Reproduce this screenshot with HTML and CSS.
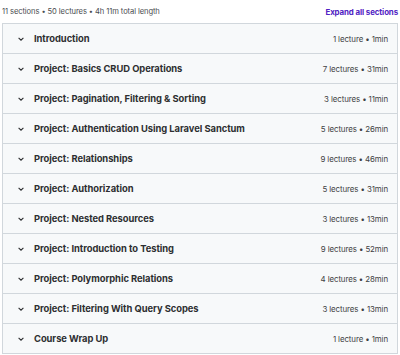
FILE: index.html
```html
<!DOCTYPE html>
<html>
<head>
<meta charset="utf-8">
<link rel="stylesheet" href="styles.css">
</head>
<body>
<div class="curriculum">
  <div class="top">
    <span class="summary">11 sections • 50 lectures • 4h 11m total length</span>
    <button class="expand">Expand all sections</button>
  </div>
  <div class="sections">
    <div class="row"><span class="chev"><svg viewBox="0 0 10 10" width="8" height="8"><path d="M2 3.5 L5 6.5 L8 3.5" fill="none" stroke="#2d2f31" stroke-width="1.4"/></svg></span><span class="title">Introduction</span><span class="meta">1 lecture • 1min</span></div>
    <div class="row"><span class="chev"><svg viewBox="0 0 10 10" width="8" height="8"><path d="M2 3.5 L5 6.5 L8 3.5" fill="none" stroke="#2d2f31" stroke-width="1.4"/></svg></span><span class="title">Project: Basics CRUD Operations</span><span class="meta">7 lectures • 31min</span></div>
    <div class="row"><span class="chev"><svg viewBox="0 0 10 10" width="8" height="8"><path d="M2 3.5 L5 6.5 L8 3.5" fill="none" stroke="#2d2f31" stroke-width="1.4"/></svg></span><span class="title">Project: Pagination, Filtering &amp; Sorting</span><span class="meta">3 lectures • 11min</span></div>
    <div class="row"><span class="chev"><svg viewBox="0 0 10 10" width="8" height="8"><path d="M2 3.5 L5 6.5 L8 3.5" fill="none" stroke="#2d2f31" stroke-width="1.4"/></svg></span><span class="title">Project: Authentication Using Laravel Sanctum</span><span class="meta">5 lectures • 26min</span></div>
    <div class="row"><span class="chev"><svg viewBox="0 0 10 10" width="8" height="8"><path d="M2 3.5 L5 6.5 L8 3.5" fill="none" stroke="#2d2f31" stroke-width="1.4"/></svg></span><span class="title">Project: Relationships</span><span class="meta">9 lectures • 46min</span></div>
    <div class="row"><span class="chev"><svg viewBox="0 0 10 10" width="8" height="8"><path d="M2 3.5 L5 6.5 L8 3.5" fill="none" stroke="#2d2f31" stroke-width="1.4"/></svg></span><span class="title">Project: Authorization</span><span class="meta">5 lectures • 31min</span></div>
    <div class="row"><span class="chev"><svg viewBox="0 0 10 10" width="8" height="8"><path d="M2 3.5 L5 6.5 L8 3.5" fill="none" stroke="#2d2f31" stroke-width="1.4"/></svg></span><span class="title">Project: Nested Resources</span><span class="meta">3 lectures • 13min</span></div>
    <div class="row"><span class="chev"><svg viewBox="0 0 10 10" width="8" height="8"><path d="M2 3.5 L5 6.5 L8 3.5" fill="none" stroke="#2d2f31" stroke-width="1.4"/></svg></span><span class="title">Project: Introduction to Testing</span><span class="meta">9 lectures • 52min</span></div>
    <div class="row"><span class="chev"><svg viewBox="0 0 10 10" width="8" height="8"><path d="M2 3.5 L5 6.5 L8 3.5" fill="none" stroke="#2d2f31" stroke-width="1.4"/></svg></span><span class="title">Project: Polymorphic Relations</span><span class="meta">4 lectures • 28min</span></div>
    <div class="row"><span class="chev"><svg viewBox="0 0 10 10" width="8" height="8"><path d="M2 3.5 L5 6.5 L8 3.5" fill="none" stroke="#2d2f31" stroke-width="1.4"/></svg></span><span class="title">Project: Filtering With Query Scopes</span><span class="meta">3 lectures • 13min</span></div>
    <div class="row"><span class="chev"><svg viewBox="0 0 10 10" width="8" height="8"><path d="M2 3.5 L5 6.5 L8 3.5" fill="none" stroke="#2d2f31" stroke-width="1.4"/></svg></span><span class="title">Course Wrap Up</span><span class="meta">1 lecture • 1min</span></div>
  </div>
</div>
</body>
</html>
```
FILE: styles.css
```css
html, body {
  margin: 0;
  padding: 0;
  background: #ffffff;
}
body {
  font-family: "Inter", "Liberation Sans", sans-serif;
  color: #2d2f31;
}
.curriculum {
  width: 396px;
  padding: 0 2px 0 2px;
}
.top {
  display: flex;
  justify-content: space-between;
  align-items: center;
  height: 23px;
}
.summary {
  font-size: 7.6px;
  color: #4a4d50;
  letter-spacing: -0.1px;
}
.expand {
  border: none;
  background: none;
  padding: 0;
  font-family: inherit;
  font-size: 7.9px;
  font-weight: 700;
  color: #5022c3;
  letter-spacing: -0.1px;
}
.sections {
  border: 1px solid #d1d7dc;
  border-bottom: none;
}
.row {
  display: flex;
  align-items: center;
  height: 29px;
  background: #f7f9fa;
  border-bottom: 1px solid #d1d7dc;
  padding: 0 9px 0 14px;
}
.chev {
  display: flex;
  align-items: center;
  width: 17px;
}
.title {
  flex: 1;
  font-size: 9.4px;
  font-weight: 700;
  letter-spacing: -0.05px;
}
.meta {
  font-size: 7.9px;
  color: #3e4143;
  letter-spacing: -0.1px;
}
```
